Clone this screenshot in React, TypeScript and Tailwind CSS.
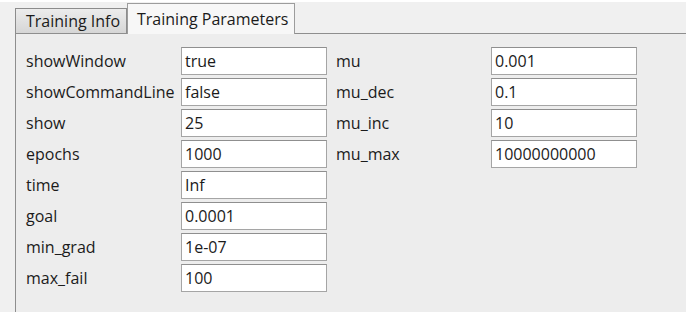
const leftParams = [
  { name: "showWindow", value: "true" },
  { name: "showCommandLine", value: "false" },
  { name: "show", value: "25" },
  { name: "epochs", value: "1000" },
  { name: "time", value: "Inf" },
  { name: "goal", value: "0.0001" },
  { name: "min_grad", value: "1e-07" },
  { name: "max_fail", value: "100" },
];

const rightParams = [
  { name: "mu", value: "0.001" },
  { name: "mu_dec", value: "0.1" },
  { name: "mu_inc", value: "10" },
  { name: "mu_max", value: "10000000000" },
];

function Field({ value }: { value: string }) {
  return (
    <div className="flex h-[28px] items-center border border-[#a5a5a5] border-t-[#8f8f8f] bg-white pl-[3px] text-[#1b1b1b]">
      {value}
    </div>
  );
}

export default function App() {
  return (
    <div className="h-[314px] w-[700px] bg-white font-['Open_Sans',sans-serif] text-[16px] text-[#1b1b1b]">
      <div className="mt-[2px] flex h-[310px] w-[686px] flex-col bg-[#f0f0f0] pl-[15px]">
        <div className="flex h-[31px] items-end">
          <div className="flex h-[25px] w-[112px] items-center border border-b-0 border-[#8c8c8c] bg-gradient-to-b from-[#ececec] to-[#d6d6d6] pl-[10px] leading-none">
            Training Info
          </div>
          <div className="relative z-10 -mb-px flex h-[31px] w-[168px] items-center border border-b-0 border-[#9c9c9c] bg-[#f7f7f7] pl-[9px] leading-none">
            Training Parameters
          </div>
        </div>
        <div className="flex-1 border-l border-t border-[#8e8e8e] bg-[#ededed] pl-[10px] pt-[13px]">
          <div className="grid grid-cols-[155px_146px_164px_146px] gap-y-[3px]">
            {leftParams.map((p, i) => (
              <div key={p.name} className="contents">
                <div className="flex h-[28px] items-center">{p.name}</div>
                <Field value={p.value} />
                {rightParams[i] ? (
                  <>
                    <div className="flex h-[28px] items-center pl-[9px]">
                      {rightParams[i].name}
                    </div>
                    <Field value={rightParams[i].value} />
                  </>
                ) : (
                  <>
                    <div />
                    <div />
                  </>
                )}
              </div>
            ))}
          </div>
        </div>
      </div>
    </div>
  );
}
